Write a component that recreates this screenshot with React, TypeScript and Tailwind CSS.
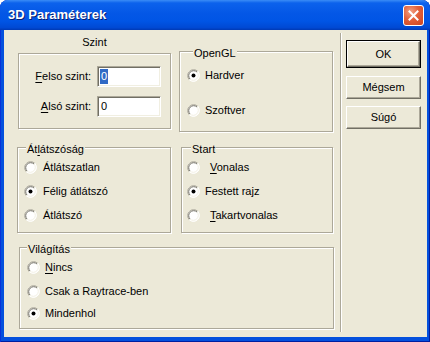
import React from 'react';

const FONT = { fontFamily: '"Liberation Sans", Arial, sans-serif' };

function Radio({ checked }: { checked?: boolean }) {
  return (
    <svg width="13" height="13" viewBox="0 0 13 13" className="shrink-0">
      <circle cx="6.5" cy="6.5" r="6" fill="#fff" />
      <path d="M2.26 10.74 A6 6 0 0 1 10.74 2.26" stroke="#ACA899" strokeWidth="1" fill="none" />
      <path d="M10.74 2.26 A6 6 0 0 1 2.26 10.74" stroke="#fff" strokeWidth="1" fill="none" />
      <path d="M2.97 10.03 A5 5 0 0 1 10.03 2.97" stroke="#716F64" strokeWidth="1" fill="none" />
      <path d="M10.03 2.97 A5 5 0 0 1 2.97 10.03" stroke="#F1EFE2" strokeWidth="1" fill="none" />
      {checked && <circle cx="6.5" cy="6.5" r="2" fill="#000" />}
    </svg>
  );
}

function RadioRow({
  checked,
  gap = 'gap-[5px]',
  className = '',
  children,
}: {
  checked?: boolean;
  gap?: string;
  className?: string;
  children: React.ReactNode;
}) {
  return (
    <div className={`flex h-[13px] items-center ${gap} ${className}`}>
      <Radio checked={checked} />
      <span className="leading-[13px] whitespace-nowrap">{children}</span>
    </div>
  );
}

// etched frame like the classic group box
const ETCHED = 'border border-[#ACA899] shadow-[inset_1px_1px_0_#fff,1px_1px_0_#fff]';

function GroupBox({
  title,
  titleOffset,
  className,
  children,
}: {
  title: React.ReactNode;
  titleOffset: string;
  className: string;
  children: React.ReactNode;
}) {
  return (
    <div className={`flex flex-col ${ETCHED} ${className}`}>
      <div className={`-mt-[5px] ${titleOffset} w-fit bg-[#ECE9D8] px-[1px] leading-[13px]`}>{title}</div>
      {children}
    </div>
  );
}

function Field({ label, value, selected }: { label: React.ReactNode; value: string; selected?: boolean }) {
  return (
    <>
      <span className="self-center text-right leading-[13px]">{label}</span>
      <div className="flex h-[21px] items-center border border-t-[#ACA899] border-l-[#ACA899] border-b-white border-r-white bg-white pl-[2px] shadow-[inset_1px_1px_0_#716F64,inset_-1px_-1px_0_#F1EFE2]">
        <span className={selected ? 'bg-[#316AC5] px-[1px] leading-[15px] text-white' : 'px-[1px] leading-[15px]'}>
          {value}
        </span>
      </div>
    </>
  );
}

function Button({ label, primary, className = '' }: { label: string; primary?: boolean; className?: string }) {
  const face = (
    <div className="flex h-full w-full items-center justify-center border border-t-white border-l-white border-r-[#716F64] border-b-[#716F64] bg-[#ECE9D8] shadow-[inset_-1px_-1px_0_#ACA899]">
      {label}
    </div>
  );
  if (primary)
    return <div className={`border border-black ${className}`}>{face}</div>;
  return <div className={className}>{face}</div>;
}

function U({ children }: { children: React.ReactNode }) {
  return <span className="underline underline-offset-[2px]">{children}</span>;
}

export default function App() {
  return (
    <div className="h-[342px] w-[430px] bg-white text-[11px] text-black" style={FONT}>
      <div className="flex h-full w-full flex-col overflow-hidden rounded-t-[8px] bg-[#0450DD] shadow-[inset_1px_0_0_#0831D9,inset_-1px_0_0_#001EA0,inset_0_-1px_0_#001EA0]">
        {/* title bar */}
        <div className="flex h-[30px] shrink-0 items-center justify-between bg-[linear-gradient(to_bottom,#3A8CF6_0%,#0C62EC_10%,#0457E6_45%,#0055E5_70%,#0049D4_92%,#0039B4_100%)] pl-[8px] pr-[6px]">
          <span className="text-[13px] font-bold text-white [text-shadow:1px_1px_0_#0A1E6E]">3D Paraméterek</span>
          <div className="flex h-[21px] w-[21px] items-center justify-center rounded-[3px] border border-white bg-[radial-gradient(circle_at_35%_30%,#F2A184_0%,#E3603A_45%,#CC4420_100%)]">
            <svg width="11" height="11" viewBox="0 0 11 11">
              <path d="M1.5 1.5 L9.5 9.5 M9.5 1.5 L1.5 9.5" stroke="#fff" strokeWidth="2" strokeLinecap="square" />
            </svg>
          </div>
        </div>

        {/* body */}
        <div className="ml-[4px] flex h-[307px] w-[423px] bg-[#ECE9D8]">
          <div className="flex w-[336px] shrink-0 flex-col">
            {/* row 1 */}
            <div className="flex items-start">
              <div className="ml-[14px] flex w-[153px] flex-col">
                <div className="mt-[6px] text-center leading-[13px]">Szint</div>
                <div className={`mt-[4px] grid h-[76px] grid-cols-[72px_64px] content-start gap-x-[6px] gap-y-[9px] pt-[12px] ${ETCHED}`}>
                  <Field label={<><U>F</U>elso szint:</>} value="0" selected />
                  <Field label={<><U>A</U>lsó szint:</>} value="0" />
                </div>
              </div>
              <GroupBox title="OpenGL" titleOffset="ml-[6px]" className="ml-[8px] mt-[21px] h-[81px] w-[154px] pl-[7px]">
                <RadioRow checked className="mt-[9px]">Hardver</RadioRow>
                <RadioRow className="mt-[22px]">Szoftver</RadioRow>
              </GroupBox>
            </div>

            {/* row 2 */}
            <div className="mt-[15px] flex items-start">
              <GroupBox title={<>Át<U>l</U>átszóság</>} titleOffset="ml-[2px]" className="ml-[13px] h-[86px] w-[154px] pl-[6px]">
                <RadioRow gap="gap-[6px]" className="mt-[5px]">Átlátszatlan</RadioRow>
                <RadioRow checked gap="gap-[6px]" className="mt-[11px]">Félig átlátszó</RadioRow>
                <RadioRow gap="gap-[6px]" className="mt-[11px]">Átlátszó</RadioRow>
              </GroupBox>
              <GroupBox title="Start" titleOffset="ml-[4px]" className="ml-[10px] h-[86px] w-[152px] pl-[5px]">
                <RadioRow gap="gap-[10px]" className="mt-[5px]"><U>V</U>onalas</RadioRow>
                <RadioRow checked className="mt-[11px]">Festett rajz</RadioRow>
                <RadioRow gap="gap-[10px]" className="mt-[11px]"><U>T</U>akartvonalas</RadioRow>
              </GroupBox>
            </div>

            {/* row 3 */}
            <GroupBox title="Világítás" titleOffset="ml-[0px]" className="ml-[15px] mt-[14px] h-[82px] w-[315px] pl-[7px]">
              <RadioRow className="mt-[5px]"><U>N</U>incs</RadioRow>
              <RadioRow className="mt-[11px]">Csak a Raytrace-ben</RadioRow>
              <RadioRow checked className="mt-[9px]">Mindenhol</RadioRow>
            </GroupBox>
          </div>

          {/* separator */}
          <div className="mb-[5px] mt-[3px] w-[2px] shrink-0 border-l border-r border-l-[#ACA899] border-r-white" />

          {/* buttons */}
          <div className="ml-[4px] flex w-[75px] flex-col">
            <Button label="OK" primary className="mt-[10px] h-[28px]" />
            <Button label="Mégsem" className="mt-[8px] h-[23px]" />
            <Button label="Súgó" className="mt-[7px] h-[23px]" />
          </div>
        </div>
      </div>
    </div>
  );
}
